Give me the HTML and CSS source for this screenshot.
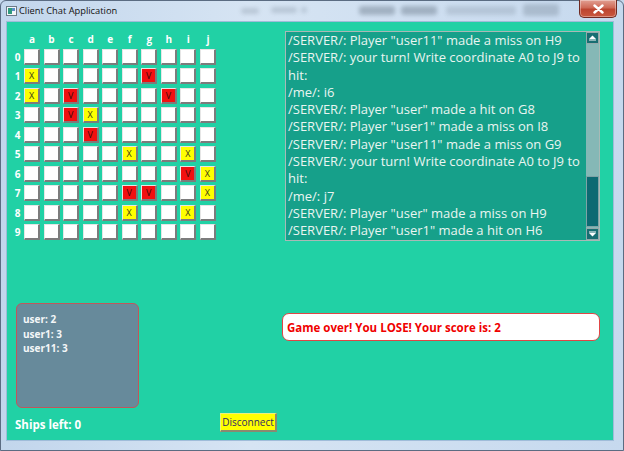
FILE: index.html
```html
<!DOCTYPE html>
<html>
<head>
<meta charset="utf-8">
<title>Client Chat Application</title>
<link rel="stylesheet" href="styles.css">
</head>
<body>
<div class="window">
  <div class="titlebar">
    <span class="app-icon">
      <svg width="11" height="10" viewBox="0 0 11 10"><rect x="0.5" y="0.5" width="10" height="9" fill="#f4f6f8" stroke="#6c7a88"/><rect x="2" y="2" width="4" height="6" fill="#2f9a7e"/><rect x="6" y="2" width="3" height="3" fill="#5a8fc8"/></svg>
    </span>
    <span class="title">Client Chat Application</span>
    <span class="ghost">
      <i class="g1"></i><i class="g2"></i><i class="g3"></i><i class="g4"></i><i class="g5"></i><i class="g6"></i><i class="g7"></i>
    </span>
    <span class="close">
      <svg width="11" height="10" viewBox="0 0 11 10"><path d="M1.5 1.5 L9.5 8.5 M9.5 1.5 L1.5 8.5" stroke="#ffffff" stroke-width="2.4" stroke-linecap="round"/></svg>
    </span>
  </div>
  <div class="frame">
    <div class="client">
      <div class="top">
        <div class="board">
          <span></span><span class="col">a</span><span class="col">b</span><span class="col">c</span><span class="col">d</span><span class="col">e</span><span class="col">f</span><span class="col">g</span><span class="col">h</span><span class="col">i</span><span class="col">j</span>

          <span class="row">0</span><span class="cell"></span><span class="cell"></span><span class="cell"></span><span class="cell"></span><span class="cell"></span><span class="cell"></span><span class="cell"></span><span class="cell"></span><span class="cell"></span><span class="cell"></span>

          <span class="row">1</span><span class="cell miss">X</span><span class="cell"></span><span class="cell"></span><span class="cell"></span><span class="cell"></span><span class="cell"></span><span class="cell hit">V</span><span class="cell"></span><span class="cell"></span><span class="cell"></span>

          <span class="row">2</span><span class="cell miss">X</span><span class="cell"></span><span class="cell hit">V</span><span class="cell"></span><span class="cell"></span><span class="cell"></span><span class="cell"></span><span class="cell hit">V</span><span class="cell"></span><span class="cell"></span>

          <span class="row">3</span><span class="cell"></span><span class="cell"></span><span class="cell hit">V</span><span class="cell miss">X</span><span class="cell"></span><span class="cell"></span><span class="cell"></span><span class="cell"></span><span class="cell"></span><span class="cell"></span>

          <span class="row">4</span><span class="cell"></span><span class="cell"></span><span class="cell"></span><span class="cell hit">V</span><span class="cell"></span><span class="cell"></span><span class="cell"></span><span class="cell"></span><span class="cell"></span><span class="cell"></span>

          <span class="row">5</span><span class="cell"></span><span class="cell"></span><span class="cell"></span><span class="cell"></span><span class="cell"></span><span class="cell miss">X</span><span class="cell"></span><span class="cell"></span><span class="cell miss">X</span><span class="cell"></span>

          <span class="row">6</span><span class="cell"></span><span class="cell"></span><span class="cell"></span><span class="cell"></span><span class="cell"></span><span class="cell"></span><span class="cell"></span><span class="cell"></span><span class="cell hit">V</span><span class="cell miss">X</span>

          <span class="row">7</span><span class="cell"></span><span class="cell"></span><span class="cell"></span><span class="cell"></span><span class="cell"></span><span class="cell hit">V</span><span class="cell hit">V</span><span class="cell"></span><span class="cell"></span><span class="cell miss">X</span>

          <span class="row">8</span><span class="cell"></span><span class="cell"></span><span class="cell"></span><span class="cell"></span><span class="cell"></span><span class="cell miss">X</span><span class="cell"></span><span class="cell"></span><span class="cell miss">X</span><span class="cell"></span>

          <span class="row">9</span><span class="cell"></span><span class="cell"></span><span class="cell"></span><span class="cell"></span><span class="cell"></span><span class="cell"></span><span class="cell"></span><span class="cell"></span><span class="cell"></span><span class="cell"></span>
        </div>

        <div class="chat">
          <div class="log">
            <div>/SERVER/: Player "user11" made a miss on H9</div>
            <div>/SERVER/: your turn! Write coordinate A0 to J9 to<br>hit:</div>
            <div>/me/: i6</div>
            <div>/SERVER/: Player "user" made a hit on G8</div>
            <div>/SERVER/: Player "user1" made a miss on I8</div>
            <div>/SERVER/: Player "user11" made a miss on G9</div>
            <div>/SERVER/: your turn! Write coordinate A0 to J9 to<br>hit:</div>
            <div>/me/: j7</div>
            <div>/SERVER/: Player "user" made a miss on H9</div>
            <div>/SERVER/: Player "user1" made a hit on H6</div>
          </div>
          <div class="scrollbar">
            <div class="sb-btn">
              <svg width="9" height="6" viewBox="0 0 9 6"><path d="M4.5 0.5 L8 4 L1 4 Z" fill="#ffffff"/><rect x="1" y="4.5" width="7" height="1" fill="#ffffff"/></svg>
            </div>
            <div class="sb-track"><div class="sb-thumb"></div></div>
            <div class="sb-btn">
              <svg width="9" height="6" viewBox="0 0 9 6"><rect x="1" y="0.5" width="7" height="1" fill="#ffffff"/><path d="M1 2 L8 2 L4.5 5.5 Z" fill="#ffffff"/></svg>
            </div>
          </div>
        </div>
      </div>

      <div class="mid">
        <div class="scores">
          <div>user: 2</div>
          <div>user1: 3</div>
          <div>user11: 3</div>
        </div>
        <div class="result">Game over! You LOSE! Your score is: 2</div>
      </div>

      <div class="bottom">
        <div class="ships">Ships left: 0</div>
        <button class="disconnect">Disconnect</button>
      </div>
    </div>
  </div>
</div>
</body>
</html>
```
FILE: styles.css
```css
* { box-sizing: border-box; }
html, body { margin: 0; padding: 0; }
body {
  width: 624px;
  height: 451px;
  overflow: hidden;
  font-family: "Open Sans", "Noto Sans", sans-serif;
  background: #c4d7ec;
}

.window {
  width: 624px;
  height: 451px;
  display: flex;
  flex-direction: column;
  border: 1px solid #5b6c82;
  border-radius: 6px 6px 0 0;
  background: linear-gradient(90deg, #c2d6ec 0%, #d6e4f3 40%, #c6d9ee 100%);
}

.titlebar {
  height: 21px;
  flex: none;
  display: flex;
  align-items: flex-start;
  position: relative;
}
.app-icon {
  display: flex;
  margin: 5px 0 0 5px;
  width: 11px;
  height: 10px;
}
.title {
  margin: 3px 0 0 2px;
  font-family: "Open Sans", sans-serif;
  font-size: 9.3px;
  line-height: 14px;
  color: #111111;
}
.ghost {
  position: absolute;
  left: 240px;
  top: 3px;
  width: 320px;
  height: 14px;
  filter: blur(2px);
  opacity: 0.35;
}
.ghost i {
  position: absolute;
  top: 2px;
  height: 9px;
  background: #4b5a6a;
  border-radius: 3px;
}
.ghost .g1 { left: 0; width: 18px; top: 4px; height: 6px; opacity: .6; }
.ghost .g2 { left: 30px; width: 26px; top: 3px; height: 6px; opacity: .6; }
.ghost .g3 { left: 60px; width: 6px; top: 3px; height: 6px; opacity: .6; }
.ghost .g4 { left: 118px; width: 36px; }
.ghost .g5 { left: 160px; width: 36px; }
.ghost .g6 { left: 205px; width: 70px; opacity: .5; }
.ghost .g7 { left: 282px; width: 36px; top: 0; height: 12px; opacity: .7; }

.close {
  margin: -1px 6px 0 auto;
  width: 38px;
  height: 18px;
  display: flex;
  align-items: center;
  justify-content: center;
  background: linear-gradient(#e2a093 0%, #cf6a57 45%, #bd4530 55%, #c9583f 100%);
  border: 1px solid #6f2a22;
  border-top: none;
  border-radius: 0 0 5px 5px;
  box-shadow: inset 0 0 0 1px rgba(255,255,255,0.35);
  position: relative;
  z-index: 1;
}

.frame {
  flex: 1;
  display: flex;
  padding: 0 10px 10px 6px;
}
.client {
  flex: 1;
  display: flex;
  flex-direction: column;
  background: #21d1a5;
  box-shadow: 0 0 0 1px #9fbcd9;
}

/* ---------- top row ---------- */
.top {
  display: flex;
  align-items: flex-start;
  margin-top: 9px;
}

.board {
  margin: 2px 0 0 3.44px;
  display: grid;
  grid-template-columns: 10px repeat(10, 16px);
  grid-template-rows: 12px repeat(10, 16px);
  column-gap: 3.56px;
  row-gap: 3.56px;
  font-family: "Open Sans", sans-serif;
  font-weight: 700;
  font-size: 10px;
  color: #ffffff;
}
.col {
  text-align: center;
  line-height: 12px;
}
.row {
  text-align: right;
  line-height: 16px;
}
.cell {
  display: flex;
  align-items: center;
  justify-content: center;
  background: #ffffff;
  border-top: 1px solid #e6e6e6;
  border-left: 1px solid #e6e6e6;
  border-right: 2px solid #7c7c7c;
  border-bottom: 2px solid #7c7c7c;
  font-family: "Open Sans", sans-serif;
  font-weight: 400;
  font-size: 9px;
  line-height: 1;
  color: #3a3a1a;
}
.cell.miss { background: #ffff00; }
.cell.hit { background: #f21010; color: #3a0a0a; }

.chat {
  margin: 0 13px 0 auto;
  width: 315px;
  height: 210px;
  display: flex;
  background: #16a08a;
  border: 1px solid #a9b9b6;
}
.log {
  flex: 1;
  overflow: hidden;
  padding: 0 0 0 2px;
  font-family: "Open Sans", sans-serif;
  font-size: 13px;
  line-height: 17.3px;
  color: #eaf5f1;
  white-space: nowrap;
}
.scrollbar {
  width: 13px;
  display: flex;
  flex-direction: column;
  background: #85b8b6;
}
.sb-btn {
  height: 12px;
  display: flex;
  align-items: center;
  justify-content: center;
  background: #186e72;
  border: 1px solid #93a9ab;
}
.sb-track {
  flex: 1;
  display: flex;
  flex-direction: column;
  justify-content: flex-end;
}
.sb-thumb {
  height: 51px;
  margin-bottom: 1px;
  background: #0c6a72;
  border: 1px solid #7ea3a6;
}

/* ---------- middle row ---------- */
.mid {
  display: flex;
  align-items: flex-start;
  margin-top: 62px;
}
.scores {
  margin-left: 9px;
  width: 123px;
  height: 105px;
  padding: 8px 0 0 6px;
  background: #678a9b;
  border: 1px solid #c0575c;
  border-radius: 6px;
  font-family: "Open Sans", sans-serif;
  font-weight: 700;
  font-size: 10px;
  line-height: 14.5px;
  color: #f4f7f8;
}
.result {
  margin: 10px 0 0 143px;
  width: 318px;
  height: 28px;
  display: flex;
  align-items: center;
  padding-left: 4px;
  background: #ffffff;
  border: 1px solid #e04646;
  border-radius: 7px;
  font-family: "Open Sans", sans-serif;
  font-weight: 700;
  font-size: 11.5px;
  color: #f00000;
}

/* ---------- bottom row ---------- */
.bottom {
  display: grid;
  grid-template-columns: 213px auto;
  align-items: center;
  margin-top: 5px;
}
.ships {
  padding: 3px 0 0 8px;
  font-family: "Open Sans", sans-serif;
  font-weight: 700;
  font-size: 11.5px;
  color: #ffffff;
}
.disconnect {
  justify-self: start;
  width: 57px;
  height: 19px;
  margin: 0;
  padding: 0 0 1px;
  background: #ffff00;
  border-top: 1px solid #eeee80;
  border-left: 1px solid #eeee80;
  border-right: 2px solid #8a8a70;
  border-bottom: 2px solid #8a8a70;
  border-radius: 0;
  font-family: "Open Sans", sans-serif;
  font-size: 10px;
  color: #2e2a66;
  line-height: 1;
}
```
